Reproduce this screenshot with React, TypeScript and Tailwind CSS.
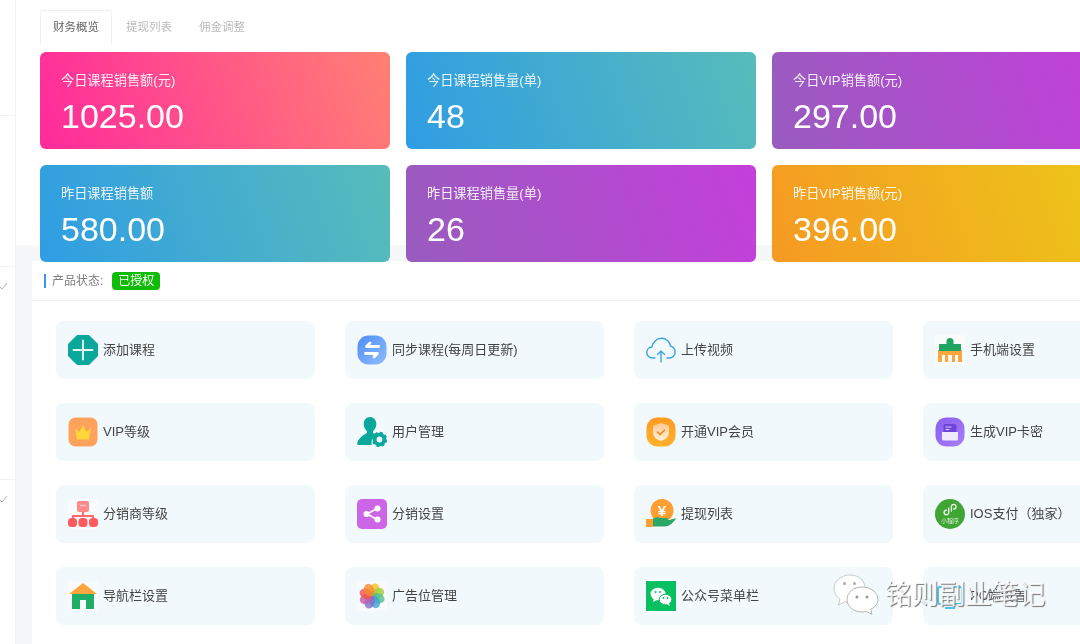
import type { ReactNode } from "react";

const CJK = "font-['Liberation_Sans','Noto_Sans_CJK_SC',sans-serif]";

const PINK = "bg-[linear-gradient(72deg,#ff2a9c,#ff8074)]";
const BLUE = "bg-[linear-gradient(72deg,#2f9de3,#58bcba)]";
const PURPLE = "bg-[linear-gradient(72deg,#985cbe,#c43fdb)]";
const ORANGE = "bg-[linear-gradient(72deg,#f59a23,#ecc818)]";

const STATS = [
  { label: "今日课程销售额(元)", value: "1025.00", bg: PINK },
  { label: "今日课程销售量(单)", value: "48", bg: BLUE },
  { label: "今日VIP销售额(元)", value: "297.00", bg: PURPLE },
  { label: "昨日课程销售额", value: "580.00", bg: BLUE },
  { label: "昨日课程销售量(单)", value: "26", bg: PURPLE },
  { label: "昨日VIP销售额(元)", value: "396.00", bg: ORANGE },
];

function Svg({ children }: { children: ReactNode }) {
  return (
    <svg width="30" height="30" viewBox="0 0 30 30" className="shrink-0">
      {children}
    </svg>
  );
}

const IconPlus = () => (
  <Svg>
    <path d="M9 .5h12L29.500 9v12L21 29.500H9L.5 21V9z" fill="#0aa89b" stroke="#0aa89b" strokeLinejoin="round" />
    <path d="M15 5.500v19M5.500 15h19" stroke="#e6f7f5" strokeWidth="1.900" strokeLinecap="round" />
  </Svg>
);

const IconSync = () => (
  <Svg>
    <defs>
      <linearGradient id="sync" x1="0" y1="0" x2="1" y2="1">
        <stop offset="0" stopColor="#4f8df5" />
        <stop offset="1" stopColor="#8fbcff" />
      </linearGradient>
    </defs>
    <rect x="0.500" y="0.500" width="29" height="29" rx="11" fill="url(#sync)" />
    <path d="M21.500 11.500H9.500l3.500-3.500M8.500 18.500h12l-3.500 3.500" fill="none" stroke="#fff" strokeWidth="2.800" strokeLinecap="round" strokeLinejoin="round" />
  </Svg>
);

const IconCloud = () => (
  <Svg>
    <path
      d="M9 23H6.500C3 23 .8 20.400.8 17.500c0-3 2.200-5.300 5-5.500C7 7 10.800 3.200 15.500 3.200c4.600 0 8.300 3.300 9 7.800 2.600.7 4.600 3.300 4.600 6.300 0 3.200-2.500 5.700-5.600 5.700H21"
      fill="none"
      stroke="#3da3e2"
      strokeWidth="1.400"
      strokeLinecap="round"
    />
    <path d="M15 27V16M11.500 19.500L15 16l3.500 3.500" fill="none" stroke="#3da3e2" strokeWidth="1.400" strokeLinecap="round" strokeLinejoin="round" />
  </Svg>
);

const IconShop = () => (
  <Svg>
    <rect width="30" height="30" fill="#f9fbfb" />
    <path d="M3 15h24v12h-4v-7h-3v7h-3v-7h-4v7h-3v-7H7v7H3z" fill="#ffa53d" />
    <path d="M11.500 9V6.500a3.500 3.500 0 0 1 7 0V9H26v7H4V9z" fill="#1fa463" />
  </Svg>
);

const IconCrown = () => (
  <Svg>
    <rect x="0.500" y="0.500" width="29" height="29" rx="7" fill="#ffa35c" />
    <path d="M7 11l4.500 4L15 7.500l3.500 7.500 4.500-4-2 11.500H9z" fill="#ffd53a" />
  </Svg>
);

const IconUser = () => (
  <Svg>
    <path d="M13 0c3.800 0 6.300 3 6.300 7 0 3-1.300 5.500-3.300 7v2c1 .5 1.800 1 2.500 1.500-2.500 2-4 5-4 8.500 0 .7 0 1.300.2 2H2c-1.500 0-2-1-1.700-2.300C1 22.500 5 18.500 10 16v-2c-2-1.500-3.300-4-3.300-7 0-4 2.500-7 6.300-7z" fill="#0aa89b" />
    <circle cx="22.500" cy="22.500" r="4.800" fill="none" stroke="#0aa89b" strokeWidth="3.800" />
    <circle cx="22.500" cy="22.500" r="6.600" fill="none" stroke="#0aa89b" strokeWidth="2.200" strokeDasharray="3 2.200" />
  </Svg>
);

const IconShield = () => (
  <Svg>
    <defs>
      <linearGradient id="vipShield" x1="0" y1="0" x2="0" y2="1">
        <stop offset="0" stopColor="#ff9a1f" />
        <stop offset="1" stopColor="#ffb22e" />
      </linearGradient>
      <linearGradient id="vipShieldIn" x1="0" y1="0" x2="0" y2="1">
        <stop offset="0" stopColor="#ffc98c" />
        <stop offset="1" stopColor="#fff1dc" />
      </linearGradient>
    </defs>
    <rect x="0.500" y="0.500" width="29" height="29" rx="11" fill="url(#vipShield)" />
    <path d="M15 6l8 2.800v6.700c0 4-3.200 7-8 8.500-4.800-1.500-8-4.500-8-8.500V8.800z" fill="url(#vipShieldIn)" />
    <path d="M11 14.500l3 3 5-5" fill="none" stroke="#f58a1f" strokeWidth="1.600" />
  </Svg>
);

const IconInbox = () => (
  <Svg>
    <defs>
      <linearGradient id="inbox" x1="0" y1="0" x2="1" y2="1">
        <stop offset="0" stopColor="#8a5cf0" />
        <stop offset="1" stopColor="#a77ff7" />
      </linearGradient>
    </defs>
    <rect x="0.500" y="0.500" width="29" height="29" rx="11" fill="url(#inbox)" />
    <rect x="8.500" y="7" width="13" height="10" rx="1.500" fill="#6e45d8" />
    <path d="M10.500 10h6M10.500 12.500h4" stroke="#d9ccff" strokeWidth="1" />
    <path d="M7 15h16v7a1.500 1.500 0 0 1-1.500 1.500h-13A1.500 1.500 0 0 1 7 22z" fill="#efe9ff" />
  </Svg>
);

const IconOrg = () => (
  <Svg>
    <rect width="30" height="30" fill="#f8fafb" />
    <rect x="9" y="2" width="12" height="11" rx="2" fill="#ff8a8a" />
    <path d="M12 6.500h6" stroke="#ffd6d6" strokeWidth="1.200" />
    <path d="M15 13v4M5 20v-3h20v3" fill="none" stroke="#ff6a6a" strokeWidth="2" />
    <rect x="0" y="19" width="9" height="9" rx="3.500" fill="#ff5a5f" />
    <rect x="10.500" y="19" width="9" height="9" rx="3.500" fill="#ff5a5f" />
    <rect x="21" y="19" width="9" height="9" rx="3.500" fill="#ff5a5f" />
  </Svg>
);

const IconShare = () => (
  <Svg>
    <rect width="30" height="30" rx="5" fill="#cd66e6" />
    <path d="M20 9.500L10 15l10 5.500" fill="none" stroke="#fff" strokeWidth="1.600" />
    <circle cx="20.500" cy="9.500" r="3" fill="#fff" />
    <circle cx="9.500" cy="15" r="3" fill="#fff" />
    <circle cx="20.500" cy="20.500" r="3" fill="#fff" />
  </Svg>
);

const IconMoney = () => (
  <Svg>
    <circle cx="16" cy="11.500" r="11.500" fill="#ff9f33" />
    <text x="16" y="17" textAnchor="middle" fontSize="15" fontWeight="700" fill="#fff" fontFamily="Liberation Sans">¥</text>
    <path d="M5 21c3-2.500 7-3.500 10-2h6c1.200 0 1.200 2 0 2h-3 5c2-.5 5-2 7-1.500-2 3-6 8-11 8H5z" fill="#2aa866" />
    <rect x="0" y="20" width="7" height="8" fill="#ff9f33" />
  </Svg>
);

const IconMini = () => (
  <Svg>
    <circle cx="15" cy="15" r="15" fill="#3fa535" />
    <path d="M12.500 10v4.500a2.300 2.300 0 1 1-2.300-2.300M17.500 11a2.300 2.300 0 1 0-2.300-2.300V13" fill="none" stroke="#e8f6e4" strokeWidth="1.400" strokeLinecap="round" transform="translate(1.200 -1)" />
    <text x="15" y="23.500" textAnchor="middle" fontSize="6" fill="#d8f0d2" fontFamily="Noto Sans CJK SC">小程序</text>
  </Svg>
);

const IconHouse = () => (
  <Svg>
    <rect width="30" height="30" fill="#f8fafb" />
    <path d="M4 12h22v16H18v-9h-6v9H4z" fill="#1fae6a" />
    <path d="M15 2l14 11H1z" fill="#ffa53d" />
  </Svg>
);

const IconPhotos = () => {
  const colors = ["#f7c41f", "#9ccc3a", "#4fbf8f", "#3f9fd8", "#7b6fc6", "#c45aa8", "#f0524d", "#f58a2e"];
  return (
    <Svg>
      <rect width="30" height="30" fill="#f9fafb" />
      {colors.map((c, i) => (
        <ellipse key={c} cx="15" cy="8.500" rx="5" ry="6.500" fill={c} fillOpacity="0.800" transform={`rotate(${i * 45 + 20} 15 15)`} />
      ))}
    </Svg>
  );
};

const IconWechat = () => (
  <Svg>
    <rect width="30" height="30" fill="#07c160" />
    <ellipse cx="12" cy="13" rx="7.500" ry="6.300" fill="#fff" />
    <path d="M8 17l-1 4 4-2z" fill="#fff" />
    <ellipse cx="19.500" cy="18.500" rx="6.300" ry="5.300" fill="#fff" stroke="#07c160" strokeWidth="1" />
    <path d="M23 22l1 3-3.500-2z" fill="#fff" />
    <circle cx="9.500" cy="11" r="1" fill="#07c160" />
    <circle cx="14" cy="11" r="1" fill="#07c160" />
    <circle cx="17.500" cy="17" r="0.900" fill="#07c160" />
    <circle cx="21.500" cy="17" r="0.900" fill="#07c160" />
  </Svg>
);

const IconPc = () => (
  <Svg>
    <rect x="3" y="6" width="24" height="17" rx="2" fill="none" stroke="#4cc3e8" strokeWidth="2" />
    <path d="M10 27h10" stroke="#4cc3e8" strokeWidth="2" />
  </Svg>
);

const TILES: { text: string; icon: ReactNode }[] = [
  { text: "添加课程", icon: <IconPlus /> },
  { text: "同步课程(每周日更新)", icon: <IconSync /> },
  { text: "上传视频", icon: <IconCloud /> },
  { text: "手机端设置", icon: <IconShop /> },
  { text: "VIP等级", icon: <IconCrown /> },
  { text: "用户管理", icon: <IconUser /> },
  { text: "开通VIP会员", icon: <IconShield /> },
  { text: "生成VIP卡密", icon: <IconInbox /> },
  { text: "分销商等级", icon: <IconOrg /> },
  { text: "分销设置", icon: <IconShare /> },
  { text: "提现列表", icon: <IconMoney /> },
  { text: "IOS支付（独家）", icon: <IconMini /> },
  { text: "导航栏设置", icon: <IconHouse /> },
  { text: "广告位管理", icon: <IconPhotos /> },
  { text: "公众号菜单栏", icon: <IconWechat /> },
  { text: "PC端设置", icon: <IconPc /> },
];

function Check() {
  return (
    <svg width="9" height="8" viewBox="0 0 9 8" className="ml-[-1px] mt-[15px]">
      <path d="M1 5l2 2 5-6" fill="none" stroke="#b0b0b0" strokeWidth="1" />
    </svg>
  );
}

export default function App() {
  return (
    <div className={`relative flex h-[644px] w-[1080px] overflow-hidden bg-white blur-[0.4px] ${CJK}`}>
      {/* clipped sidebar */}
      <aside className="flex w-4 shrink-0 flex-col border-r border-[#f2f2f2] bg-white">
        <div className="h-[116px] border-b border-[#f2f2f2]" />
        <div className="h-[151px] border-b border-[#f2f2f2]" />
        <div className="h-[213px] border-b border-[#f2f2f2]">
          <Check />
        </div>
        <div className="flex-1">
          <Check />
        </div>
      </aside>

      <main className="flex min-w-0 flex-1 flex-col bg-[#f5f7f9]">
        {/* tabs and stats */}
        <section className="relative z-10 h-[245px] bg-white pl-6 pt-2.5">
          <div className="flex h-[34px] text-[11.500px]">
            <div className="flex w-[72px] items-center justify-center rounded-t border border-b-0 border-[#eceef0] text-[#666666]">财务概览</div>
            <div className="ml-[14px] flex items-center pt-[2px] text-[#bbbbbb]">提现列表</div>
            <div className="ml-[27px] flex items-center pt-[2px] text-[#bbbbbb]">佣金调整</div>
          </div>
          <div className="mt-2 grid w-[1082px] grid-cols-[350px_350px_350px] gap-x-4 gap-y-[16.500px]">
            {STATS.map((s) => (
              <div key={s.label} className={`h-[96.500px] rounded-md pl-[21px] pt-[18.500px] text-white ${s.bg}`}>
                <div className="text-[13.200px] leading-5 text-white/90">{s.label}</div>
                <div className="mt-[5px] text-[34px] leading-10">{s.value}</div>
              </div>
            ))}
          </div>
        </section>

        {/* product panel */}
        <section className="ml-4 mt-4 flex-1 bg-white">
          <div className="flex h-10 items-center border-b border-[#f0f0f0] pl-3">
            <span className="h-[14px] w-0.5 bg-[#3b95f0]" />
            <span className="ml-1.5 text-[12px] text-[#808080]">产品状态:</span>
            <span className="ml-[9px] flex h-[18px] w-[48px] items-center justify-center rounded-sm bg-[#12bb07] text-[12px] text-white">已授权</span>
          </div>
          <div className="ml-6 mt-5 grid w-[1160px] grid-cols-[258.500px_258.500px_258.500px_258.500px] gap-x-[30.500px] gap-y-6">
            {TILES.map((t) => (
              <div key={t.text} className="flex h-[58px] items-center rounded-lg bg-[#f2f9fd] pl-3">
                {t.icon}
                <span className="ml-[5px] whitespace-nowrap text-[13px] text-[#444444]">{t.text}</span>
              </div>
            ))}
          </div>
        </section>
      </main>

      {/* wechat watermark */}
      <div className="absolute left-[833px] top-[574px] z-20 flex items-center">
        <svg width="46" height="42" viewBox="0 0 46 42">
          <path d="M17 1C8 1 1 7 1 14.500c0 4.500 2.500 8.300 6 10.800L5.500 31l6.300-3.200c1.700.5 3.400.7 5.200.7 8.500 0 15-6 15-14S25.500 1 17 1z" fill="#fff" stroke="#c9c9c9" strokeWidth="1" />
          <path d="M29 13c-8.500 0-15 5.500-15 12.500S20.500 38 29 38c1.500 0 3-.2 4.500-.6l5.500 3-1.300-5C42 33 45 29.500 45 25.500 45 18.500 37.500 13 29 13z" fill="#fff" stroke="#b5b5b5" strokeWidth="1" />
          <circle cx="11.500" cy="9.500" r="1.500" fill="#aaa" />
          <circle cx="21.500" cy="9.500" r="1.500" fill="#aaa" />
          <circle cx="24" cy="23" r="1.500" fill="#999" />
          <circle cx="34" cy="23" r="1.500" fill="#999" />
        </svg>
        <span className="ml-[6px] whitespace-nowrap text-[27px] leading-none tracking-[-0.300px] text-white/85 [text-shadow:1px_1px_1px_#777]">
          铭则副业笔记
        </span>
      </div>
    </div>
  );
}
